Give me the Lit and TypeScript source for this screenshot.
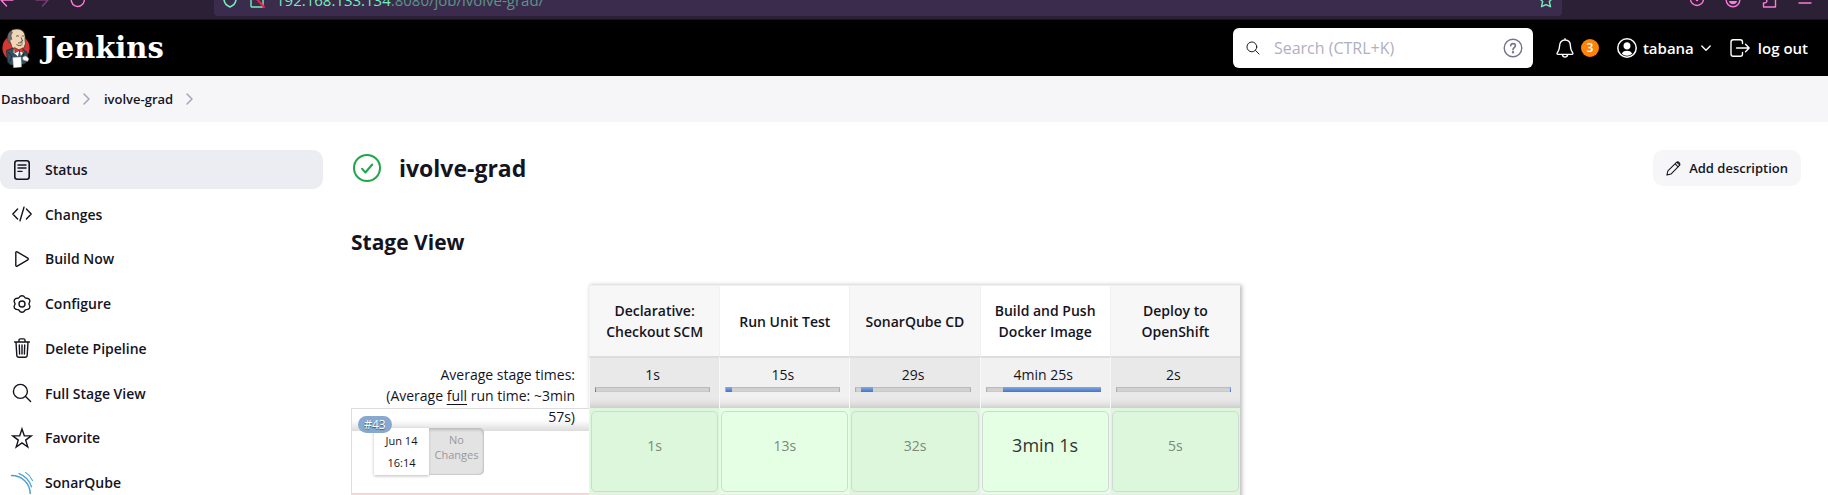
import { LitElement, html, css, svg, nothing } from "lit";
import { customElement } from "lit/decorators.js";

const icon = (body: unknown, size = 20, box = 20) => html`<svg
  class="icon" width=${size} height=${size} viewBox="0 0 ${box} ${box}" fill="none" stroke="currentColor"
  stroke-width="1.4" stroke-linecap="round" stroke-linejoin="round" aria-hidden="true">${body}</svg>`;

const glyph = {
  status: svg`<rect x="2.8" y="0.8" width="14.4" height="18.4" rx="2.4" stroke-width="1.6"/><path d="M6 5h8M6 8h8M6 11.4h4"/>`,
  changes: svg`<path d="M5.6 5 .8 10l4.8 5M14.4 5l4.8 5-4.8 5M12 3.2 8 16.8"/>`,
  build: svg`<path d="M3.8 3.6v12.8c0 .8.8 1.2 1.4.8l10.6-6.4c.7-.4.7-1.2 0-1.6L5.2 2.8c-.6-.4-1.4 0-1.4.8z"/>`,
  configure: svg`<path d="M10 .8c1.3 0 2.2.5 2.7 1.5.3.7 1 1.1 1.8 1 1.2-.1 2.3.3 3 1.4.6 1.1.5 2.2-.2 3.2-.5.7-.5 1.500 0 2.1.7 1 .8 2.2.2 3.3-.7 1.1-1.8 1.500-3 1.4-.8-.1-1.5.3-1.8 1-.5 1.1-1.4 1.7-2.7 1.7s-2.2-.6-2.7-1.7c-.3-.7-1-1.1-1.8-1-1.2.1-2.3-.3-3-1.4-.6-1.1-.5-2.3.2-3.300.5-.6.5-1.400 0-2.100-.7-1-.8-2.100-.2-3.200.7-1.100 1.800-1.500 3-1.400.8.1 1.500-.3 1.800-1C7.800 1.300 8.700.8 10 .8z" transform="translate(0 .9)"/><circle cx="10" cy="10" r="3"/>`,
  trash: svg`<path d="M2.600 4h14.800M7 3.800V2.200c0-.8.5-1.300 1.300-1.300h3.400c.8 0 1.300.5 1.300 1.300v1.600M4 4.200l.8 13c.1 1.200.8 2 2 2h6.400c1.200 0 1.900-.8 2-2l.8-13M7.300 7l.3 9M10 7v9M12.700 7l-.3 9"/>`,
  search: svg`<circle cx="8.400" cy="8.400" r="7"/><path d="m13.600 13.600 5 5"/>`,
  star: svg`<path d="m10 1 2.300 6.700 7 .1-5.600 4.300 2.100 6.900-5.800-4.100L4.200 19l2.100-6.900L.7 7.800l7-.1z" stroke-linejoin="miter"/>`,
  sonar: svg`<g stroke="#4b9fd5"><path d="M-.5 3.600C10 3.600 18 11.500 18.200 21.500" stroke-width="1.500"/><path d="M7 1.600c6 2.200 10.500 7 12.500 13.200" stroke-width="1.300"/><path d="M13.500.4c3 1.800 5.400 4.600 7 8" stroke-width="1.100"/></g>`,
  chevron: svg`<path d="m3 1 5 5-5 5" stroke-width="1.600"/>`,
  down: svg`<path d="m1.800 4 4.200 4.200L10.200 4"/>`,
  help: svg`<circle cx="10" cy="10" r="8.800"/><path d="M7.700 7.800c.2-3 4.700-2.900 4.700 0 0 1.900-2.400 1.900-2.400 3.900" stroke-width="1.600"/><circle cx="10" cy="14.200" r=".5"/>`,
  bell: svg`<path d="M10 2C6.500 2 4.600 4.600 4.600 7.800c0 4.200-1.300 5.200-2.400 7.200-.4.800 0 1.400.8 1.400h14c.8 0 1.200-.6.800-1.400-1.100-2-2.400-3-2.400-7.200C15.400 4.600 13.500 2 10 2zM10 2V.8M7.400 16.600c.1 3.300 5.100 3.300 5.200 0"/>`,
  user: svg`<circle cx="10" cy="10" r="9.200" stroke-width="1.500"/><path d="M10 4.200a3.500 3.500 0 0 1 3.500 3.700c0 2-1.500 3.500-3.500 3.500S6.500 9.900 6.500 7.900A3.500 3.500 0 0 1 10 4.200zM4.800 15.700c1.200-2.400 3-3 5.200-3s4 .6 5.200 3A8 8 0 0 1 10 17.700a8 8 0 0 1-5.200-2z" fill="currentColor" stroke="none"/>`,
  logout: svg`<path d="M12.500 5.500V4c0-1.300-.8-2.200-2.200-2.200H3.200C1.900 1.800 1 2.700 1 4v12c0 1.300.9 2.200 2.200 2.200h7.100c1.400 0 2.200-.9 2.200-2.200v-1.500M6.500 10H19M15.500 6.300 19.200 10l-3.700 3.700"/>`,
  check: svg`<circle cx="14" cy="14" r="13" stroke-width="2"/><path d="m9 14.700 3.400 3.800 6.800-8" stroke-width="2"/>`,
  pencil: svg`<path d="m1.200 18.800 1.300-5.500L14 1.900c2.300-2 5.900 1.600 4 4L6.600 17.400zM12.200 3.800l4 4M14.600 1.800l3.800 3.800"/>`,
  back: svg`<path d="M13 8H1M6.500 2 1 8l5.500 6"/>`,
  forward: svg`<path d="M1 8h12M7.500 2 13 8l-5.500 6"/>`,
  reload: svg`<path d="M12.500 3.500A6.500 6.500 0 1 1 8 1.500h5"/>`,
  shield: svg`<path d="M8 1 2 3v4c0 4 2.300 6.400 6 8 3.700-1.600 6-4 6-8V3z" stroke-width="1.600"/>`,
  insecure: svg`<rect x="2" y="1" width="12" height="14" rx="1"/><path d="m4 3 11 12" stroke="#e22850" stroke-width="2"/>`,
  bookmark: svg`<path d="m8 1 2 4.500 5 .6-3.700 3.400 1.200 5.200L8 12.600l-4.500 2.100 1.200-5.200L1 6.100l5-.6z"/>`,
  pocket: svg`<circle cx="8" cy="7" r="6.500"/><circle cx="8" cy="8" r=".6" fill="currentColor"/>`,
  mask: svg`<circle cx="8" cy="8" r="6.800"/><path d="M4 9h8c-.4 4.400-7.600 4.400-8 0z" fill="currentColor" stroke="none"/>`,
  addon: svg`<path d="M5 2h9.500v13h-12v-4c4.500.5 4.500-4.500 0-4V2z"/>`,
  menu: svg`<path d="M2 3h12M2 7h12M2 11h12"/>`,
};

const butler = html`<svg width="28" height="40" viewBox="0 0 28 40" role="img" aria-label="Jenkins">
  <circle cx="14" cy="20" r="13.600" fill="#d33833"/>
  <path d="M4.500 22.500 11 20l9 .5 4.800 3.500 1 6.500-2.300 5-5 1.500H8.500l-3-3z" fill="#335061" stroke="#1a242b" stroke-width=".7"/>
  <path d="M6.500 13C4.500 5.500 8.500 1 15 1c6 .2 8.800 4.200 8 10.500l.5 4-2 5.500-5 1.500-6.500-3-1.500-5z" fill="#f0d6b7" stroke="#30312e" stroke-width=".7"/>
  <path d="M6.600 14.200C4.600 9.500 5.600 5 9.200 2.800L10.500 4 9 7.500l1 4-1.600-.6-.4 3.600z" fill="#6d6b6d" stroke="#30312e" stroke-width=".4"/>
  <path d="M14 8.500c1-1 2.200-.9 3 0M19.800 8.200c.8-.6 1.600-.4 2.100.2M19 9.500l1.700 3.500-2 .5M14.500 16.500c2 1.600 4.500 1.300 6-.4M16 15l4.500-.3" fill="none" stroke="#30312e" stroke-width=".8"/>
  <path d="m12 20 5 3.500-1 5-4.500-4zM20.500 21.500l-2.500 2 .8 4.500 2.800-4z" fill="#fff"/>
  <path d="m12.500 19.500 4.400 2.200 4.300-2-.2 4.600-4.100-1.500-4 2z" fill="#d33833" stroke="#7d1512" stroke-width=".6"/>
  <path d="m6 24 4 5-3 5M22 24l-1 5" fill="none" stroke="#1a242b" stroke-width=".8"/>
  <path d="m10.800 29.500 8.200-.5.500 10-8 .8z" fill="#fff" stroke="#aaa" stroke-width=".4"/>
  <path d="M20.500 29.500c1.500-1.600 3-2 4.500-1l2 2.500-1.500 2.500-4.500-1.500z" fill="#fff" stroke="#777" stroke-width=".6"/>
</svg>`;

const tasks = [
  ["Status", glyph.status],
  ["Changes", glyph.changes],
  ["Build Now", glyph.build],
  ["Configure", glyph.configure],
  ["Delete Pipeline", glyph.trash],
  ["Full Stage View", glyph.search],
  ["Favorite", glyph.star],
  ["SonarQube", glyph.sonar],
] as const;

const stages = [
  { name: "Declarative: Checkout SCM", average: "1s", start: 0, share: 1, run: "1s" },
  { name: "Run Unit Test", average: "15s", start: 1, share: 5, run: "13s" },
  { name: "SonarQube CD", average: "29s", start: 5, share: 10, run: "32s" },
  { name: "Build and Push Docker Image", average: "4min 25s", start: 15, share: 85, run: "3min 1s", major: true },
  { name: "Deploy to OpenShift", average: "2s", start: 99, share: 1, run: "5s" },
];

@customElement("stage-view")
class StageView extends LitElement {
  static styles = css`
    :host { display: block; }
    .frame { width: 889px; position: relative; isolation: isolate; }
    .frame::before { content: ""; position: absolute; inset: 0 0 0 239px; box-shadow: 1px 1px 4px 1px #bbb; z-index: -1; }
    table { width: 100%; table-layout: fixed; border-spacing: 0; line-height: 21px; }
    th, td { padding: 0; box-sizing: border-box; }
    .runs { width: 238px; }
    .name, .avg, .cell, .next { border-left: 1px solid #f1f1f1; }
    .name { height: 71px; padding: 0 12px; font-weight: 600; background: #fff; border-top: 1px solid #f0f0f0; }
    .avg { height: 52px; padding: 6px 9px 0 5px; vertical-align: top; text-align: center; background: #f1f1f1; border-top: 2px solid #ddd; border-left-color: #f8f8f8; box-shadow: inset 0 -10px 10px -9px #bbb; }
    .odd.name { background: #f7f7f7; }
    .odd.avg { background: #e9e9e9; }
    .track { height: 5px; margin-top: 2px; background: #d2d2d2; box-shadow: inset 0 1px 1px #bbb, inset 1px 0 1px #aaa, inset -1px 0 1px #aaa; }
    .part { height: 5px; min-width: 1px; background: linear-gradient(#83abe0, #4474c6); }
    .label { height: 52px; vertical-align: top; text-align: right; }
    .label div { height: 50px; padding: 8px 14px 0 30px; box-sizing: border-box; }
    .build { height: 84px; vertical-align: top; border: 1px solid #ddd; border-right: 0; background: linear-gradient(#fff 8px, #fcfcfc 12px, #dcdcdc 22px, #fff 22px); }
    .tag { display: block; width: 34px; height: 17px; margin: 7px 0 -5px 6px; border-radius: 9px; background: #87a9d0; color: #fff; font-size: 12px; line-height: 17px; text-align: center; text-shadow: 0 1px 1px #456; position: relative; text-decoration: none; }
    .info { display: flex; margin-left: 22px; width: 110px; height: 47px; font-size: 11px; text-align: center; }
    .date { flex: 1; background: #fff; box-shadow: 0 1px 3px #bbb; line-height: 22px; padding-top: 2px; box-sizing: border-box; }
    .none { flex: 1; background: #e3e3e3; color: #999; line-height: 15px; padding-top: 4px; box-sizing: border-box; border-radius: 0 5px 5px 0; box-shadow: inset 0 2px 3px #bbb, inset -1px -1px 1px #ccc; }
    .cell { height: 86px; padding: 3px 1px 2px; vertical-align: top; background: #e4ffe4; }
    .odd.cell { background: #ddf7dd; }
    .result { height: 81px; box-sizing: border-box; display: grid; place-items: center; padding-bottom: 13px; border: 1px solid #ccdccf; border-radius: 5px; color: #788a78; }
    .major { font-size: 18px; color: #333; }
    .next { height: 20px; background: #e6efe6; }
    .failed { height: 20px; background: #fde8e4; border: 1px solid #f3dcd8; border-right: 0; }
    u { text-underline-offset: 3px; }
  `;
  render() {
    const odd = (i: number) => (i % 2 === 0 ? "odd" : "");
    return html`<div class="frame"><table>
      <thead>
        <tr><td class="runs"></td>${stages.map((s, i) => html`<th scope="col" class="name ${odd(i)}">${s.name}</th>`)}</tr>
      </thead>
      <tbody>
        <tr>
          <td class="label"><div>Average stage times:<br />(Average <u>full</u> run time: ~3min 57s)</div></td>
          ${stages.map((s, i) => html`<td class="avg ${odd(i)}">${s.average}
            <div class="track"><div class="part" style="margin-left:${s.start}%;width:${s.share}%"></div></div></td>`)}
        </tr>
        <tr>
          <td class="build"><a class="tag" href="#43">#43</a>
            <div class="info"><div class="date">Jun 14<br />16:14</div><div class="none">No<br />Changes</div></div></td>
          ${stages.map((s, i) => html`<td class="cell ${odd(i)}"><div class="result ${s.major ? "major" : ""}">${s.run}</div></td>`)}
        </tr>
        <tr><td class="failed"></td>${stages.map(() => html`<td class="next"></td>`)}</tr>
      </tbody>
    </table></div>`;
  }
}

@customElement("app-root")
class AppRoot extends LitElement {
  static styles = css`
    :host { display: flex; flex-direction: column; height: 100vh; overflow: hidden; background: #fff; color: #14141f; font: 14px/21px "Open Sans", "Noto Sans", sans-serif; }
    a { color: inherit; text-decoration: none; }
    button { font: inherit; color: inherit; border: 0; background: none; padding: 0; }
    .icon { flex: none; display: block; overflow: visible; }
    .chrome { flex: none; height: 20px; overflow: hidden; background: #2b2036; border-bottom: 1px solid #1a1422; box-sizing: border-box; }
    .toolbar { display: grid; grid-template-columns: 214px 1fr 266px; align-items: center; height: 40px; margin-top: -20px; color: #ff79d6; }
    .nav { display: flex; gap: 19px; }
    .dim { color: #7a3d74; }
    .address { display: flex; align-items: center; height: 32px; padding: 0 8px; border-radius: 4px; background: #3b2c4e; color: #73efbd; font-size: 15px; }
    .address .icon { margin-right: 11px; }
    .address .icon:last-child { margin: 0 0 0 auto; }
    .path { color: #5b9487; }
    .tools { display: flex; justify-content: flex-end; gap: 20px; padding-right: 15px; }
    .header { flex: none; display: flex; align-items: center; height: 56px; padding: 0 20px 0 2px; background: #000; color: #fff; }
    .brand { display: flex; align-items: center; gap: 12px; font: bold 29px/40px "DejaVu Serif", serif; }
    .search { display: flex; align-items: center; gap: 14px; width: 300px; height: 40px; box-sizing: border-box; margin-left: auto; padding: 0 10px 0 13px; border-radius: 6px; background: #fff; color: #14141f; }
    .search input { flex: 1; min-width: 0; border: 0; outline: 0; padding: 0; background: none; font: 16px/24px "Open Sans", sans-serif; }
    .search input::placeholder { color: #b0b0c0; opacity: 1; }
    .help { color: #73738c; }
    .account { display: flex; align-items: center; font-size: 15px; font-weight: 600; }
    .alerts { display: flex; align-items: center; gap: 6px; margin: 0 18px 0 22px; }
    .count { width: 18px; height: 18px; border-radius: 50%; background: #ff820a; font-size: 12px; line-height: 18px; text-align: center; }
    .account a { display: flex; align-items: center; gap: 6px; }
    .account .logout { margin-left: 18px; gap: 8px; }
    .crumbs { flex: none; display: flex; align-items: center; gap: 11px; height: 46px; padding-left: 1px; background: #f6f6f9; font-size: 13px; font-weight: 600; }
    .crumbs .icon { color: #a8a8b8; }
    .page { flex: 1; min-height: 0; display: grid; grid-template-columns: 323px 1fr; gap: 28px; padding: 28px 27px 0 0; overflow: auto; scrollbar-width: none; }
    .tasks { display: flex; flex-direction: column; justify-content: space-between; height: 352px; font-weight: 600; }
    .task { display: flex; align-items: center; gap: 13px; height: 39px; padding-left: 12px; border-radius: 10px; }
    .active { background: #ecedf3; }
    .title { display: flex; align-items: center; height: 36px; }
    .title > .icon { color: #1ea64b; margin: 0 18px 0 2px; }
    h1, h2 { margin: 0; font-weight: 700; }
    h1 { font-size: 23px; line-height: 36px; }
    h2 { margin: 42px 0 28px; font-size: 21px; line-height: 29px; }
    .edit { display: flex; align-items: center; gap: 8px; height: 36px; margin-left: auto; padding: 0 13px; border-radius: 10px; background: #f6f6f9; font-size: 13px; font-weight: 600; }
  `;
  render() {
    return html`
      <div class="chrome">
        <div class="toolbar">
          <div class="nav">${icon(glyph.back, 16, 16)}<span class="dim">${icon(glyph.forward, 16, 16)}</span>${icon(glyph.reload, 16, 16)}</div>
          <div class="address">${icon(glyph.shield, 16, 16)}${icon(glyph.insecure, 16, 16)}<span>192.168.133.134</span><span class="path">:8080/job/ivolve-grad/</span>${icon(glyph.bookmark, 16, 16)}</div>
          <div class="tools">${icon(glyph.pocket, 16, 16)}${icon(glyph.mask, 16, 16)}${icon(glyph.addon, 16, 16)}${icon(glyph.menu, 16, 16)}</div>
        </div>
      </div>
      <header class="header">
        <a class="brand" href="#">${butler}Jenkins</a>
        <div class="search">
          ${icon(glyph.search, 14)}
          <input type="search" aria-label="Search" placeholder="Search (CTRL+K)" />
          <a class="help" href="#" aria-label="Help">${icon(glyph.help)}</a>
        </div>
        <div class="account">
          <button class="alerts" aria-label="Notifications">${icon(glyph.bell)}<span class="count">3</span></button>
          <a href="#">${icon(glyph.user)}tabana${icon(glyph.down, 12, 12)}</a>
          <a class="logout" href="#">${icon(glyph.logout)}log out</a>
        </div>
      </header>
      <nav class="crumbs" aria-label="Breadcrumb">
        <a href="#">Dashboard</a>${icon(glyph.chevron, 12, 12)}<a href="#">ivolve-grad</a>${icon(glyph.chevron, 12, 12)}
      </nav>
      <div class="page">
        <nav class="tasks">
          ${tasks.map(([name, mark], i) => html`<a class="task ${i === 0 ? "active" : ""}" href="#" aria-current=${i === 0 ? "page" : nothing}>${icon(mark)}${name}</a>`)}
        </nav>
        <main>
          <div class="title">${icon(glyph.check, 28, 28)}<h1>ivolve-grad</h1>
            <button class="edit">${icon(glyph.pencil, 15)}Add description</button></div>
          <h2>Stage View</h2>
          <stage-view></stage-view>
        </main>
      </div>`;
  }
}
